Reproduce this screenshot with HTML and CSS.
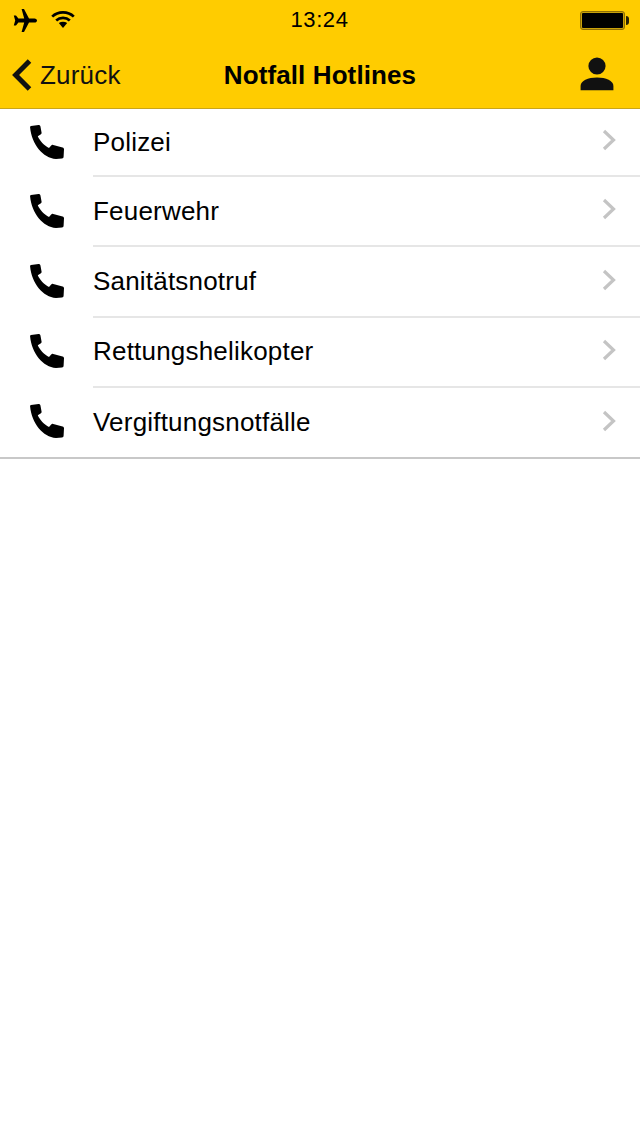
FILE: index.html
```html
<!DOCTYPE html>
<html lang="de">
<head>
    <meta charset="UTF-8">
    <meta name="viewport" content="width=device-width, initial-scale=1.0">
    <title>Notfall Hotlines</title>
    <link rel="stylesheet" href="styles.css">
</head>

<body>
    <svg class="defs" width="0" height="0" aria-hidden="true">
        <symbol id="phone" viewBox="0 0 34 34">
            <path d="M1 .9 L8.6 0 C9.6 -.1 10.2 .4 10.4 1.3 L11.6 7.8 C11.7 8.6 11.4 9.2 10.6 9.6 L7.8 11.2 C9.6 15.6 14.4 20.6 19 23 L21.2 20.4 C21.8 19.8 22.5 19.7 23.2 19.9 L32.6 22.4 C33.6 22.7 34 23.4 34 24.2 L33.6 31.8 C33.5 32.8 33 33.4 32 33.5 L26 34 C13 33.4 1.6 19 .1 2.6 C0 1.6 .2 1 1 .9 Z"/>
        </symbol>
        <symbol id="chevron" viewBox="0 0 14 22">
            <path d="M2 2 L11.5 11 L2 20" fill="none" stroke="#c4c4c4" stroke-width="3.2"/>
        </symbol>
    </svg>

    <header class="topbar">
        <div class="status">
            <div class="status-left">
                <svg class="plane" viewBox="0 0 24 23"><path d="M8.6 0 H11 L16 9.4 H21.5 C23 9.4 24 10.4 24 11.5 C24 12.6 23 13.6 21.5 13.6 H16 L11 23 H8.6 L11.2 13.6 H5.4 L3 16.6 H.8 L2.2 11.5 L.8 6.4 H3 L5.4 9.4 H11.2 Z"/></svg>
                <svg class="wifi" viewBox="0 0 24 18"><path d="M1.2 6.6 C7 1 17 1 22.8 6.6 M5.2 10.6 C9 7 15 7 18.8 10.6" fill="none" stroke="#000" stroke-width="2.7"/><path d="M7.8 13 C10.2 11.4 13.8 11.4 16.2 13 L12 18 Z"/></svg>
            </div>
            <span class="clock">13:24</span>
            <div class="battery"><span class="battery-fill"></span></div>
        </div>
        <nav class="navbar">
            <a class="back" href="#">
                <svg class="back-arrow" viewBox="0 0 20 32"><path d="M17.5 2 L3.6 16 L17.5 30" fill="none" stroke="#111" stroke-width="5"/></svg>
                Zurück
            </a>
            <h1>Notfall Hotlines</h1>
            <a class="profile" href="#">
                <svg viewBox="0 0 34 34"><circle cx="17" cy="9" r="8.6"/><path d="M.6 33.2 V29 C.6 24 8 20.6 17 20.6 C26 20.6 33.4 24 33.4 29 V33.2 Z"/></svg>
            </a>
        </nav>
    </header>

    <ul class="hotlines">
        <li><svg class="phone"><use href="#phone"/></svg><a href="#">Polizei<svg class="chevron"><use href="#chevron"/></svg></a></li>
        <li><svg class="phone"><use href="#phone"/></svg><a href="#">Feuerwehr<svg class="chevron"><use href="#chevron"/></svg></a></li>
        <li><svg class="phone"><use href="#phone"/></svg><a href="#">Sanitätsnotruf<svg class="chevron"><use href="#chevron"/></svg></a></li>
        <li><svg class="phone"><use href="#phone"/></svg><a href="#">Rettungshelikopter<svg class="chevron"><use href="#chevron"/></svg></a></li>
        <li><svg class="phone"><use href="#phone"/></svg><a href="#">Vergiftungsnotfälle<svg class="chevron"><use href="#chevron"/></svg></a></li>
    </ul>
</body>
</html>
```

FILE: styles.css
```css
body {
    font-family: "Liberation Sans", Arial, sans-serif;
    margin: 0;
    padding: 0;
    background-color: #fff;
    color: #000;
}

a {
    color: inherit;
    text-decoration: none;
}

.defs {
    position: absolute;
}

.topbar {
    background: #ffcc00;
    border-bottom: 1px solid #c9a519;
    height: 108px;
}

.status {
    height: 40px;
    display: flex;
    align-items: center;
    justify-content: space-between;
    padding: 0 12px 0 13px;
    position: relative;
}

.status-left {
    display: flex;
    align-items: center;
    gap: 14px;
}

.plane {
    width: 24px;
    height: 23px;
    fill: #000;
}

.wifi {
    width: 24px;
    height: 18px;
    fill: #000;
    margin-top: -2px;
}

.clock {
    font-size: 22px;
    position: absolute;
    left: -1px;
    right: 0;
    text-align: center;
    letter-spacing: .6px;
}

.battery {
    width: 45px;
    height: 19px;
    box-sizing: border-box;
    border: 1px solid #8f6f05;
    border-radius: 3px;
    padding: 1px;
    background: #c9a20a;
    position: relative;
    margin-right: 3px;
}

.battery::after {
    content: "";
    position: absolute;
    right: -5px;
    top: 4px;
    width: 3px;
    height: 9px;
    background: #2a2304;
    border-radius: 0 3px 3px 0;
}

.battery-fill {
    display: block;
    height: 100%;
    background: #000;
    border-radius: 1px;
}

.navbar {
    height: 66px;
    padding: 2px 26px 0 12px;
    display: flex;
    align-items: center;
    justify-content: space-between;
    position: relative;
}

.navbar h1 {
    position: absolute;
    left: 0;
    right: 0;
    margin: 0;
    text-align: center;
    font-size: 26px;
    font-weight: bold;
    letter-spacing: .1px;
}

.back {
    display: flex;
    align-items: center;
    gap: 8px;
    font-size: 26px;
    letter-spacing: .2px;
    color: #111;
}

.back-arrow {
    width: 20px;
    height: 32px;
}

.profile {
    display: flex;
    fill: #111;
    margin-top: -3px;
}

.profile svg {
    width: 34px;
    height: 34px;
}

.hotlines {
    list-style-type: none;
    margin: 0;
    padding: 0;
    border-bottom: 2px solid #c8c8c8;
}

.hotlines li {
    display: flex;
    align-items: center;
    height: 70.4px;
    padding-left: 30px;
}

.hotlines li:first-child {
    height: 68px;
}

.hotlines li:last-child {
    height: 69px;
}

.phone {
    width: 34px;
    height: 34px;
    fill: #000;
    margin-right: 29px;
    margin-bottom: 3px;
    flex-shrink: 0;
}

.hotlines a {
    flex: 1;
    align-self: stretch;
    display: flex;
    align-items: center;
    justify-content: space-between;
    font-size: 26px;
    letter-spacing: .2px;
    padding-right: 24px;
    border-bottom: 2px solid #e6e6e6;
    box-sizing: border-box;
}

.hotlines li:last-child a {
    border-bottom: none;
}

.chevron {
    width: 14px;
    height: 22px;
    margin-bottom: 4px;
}
```
